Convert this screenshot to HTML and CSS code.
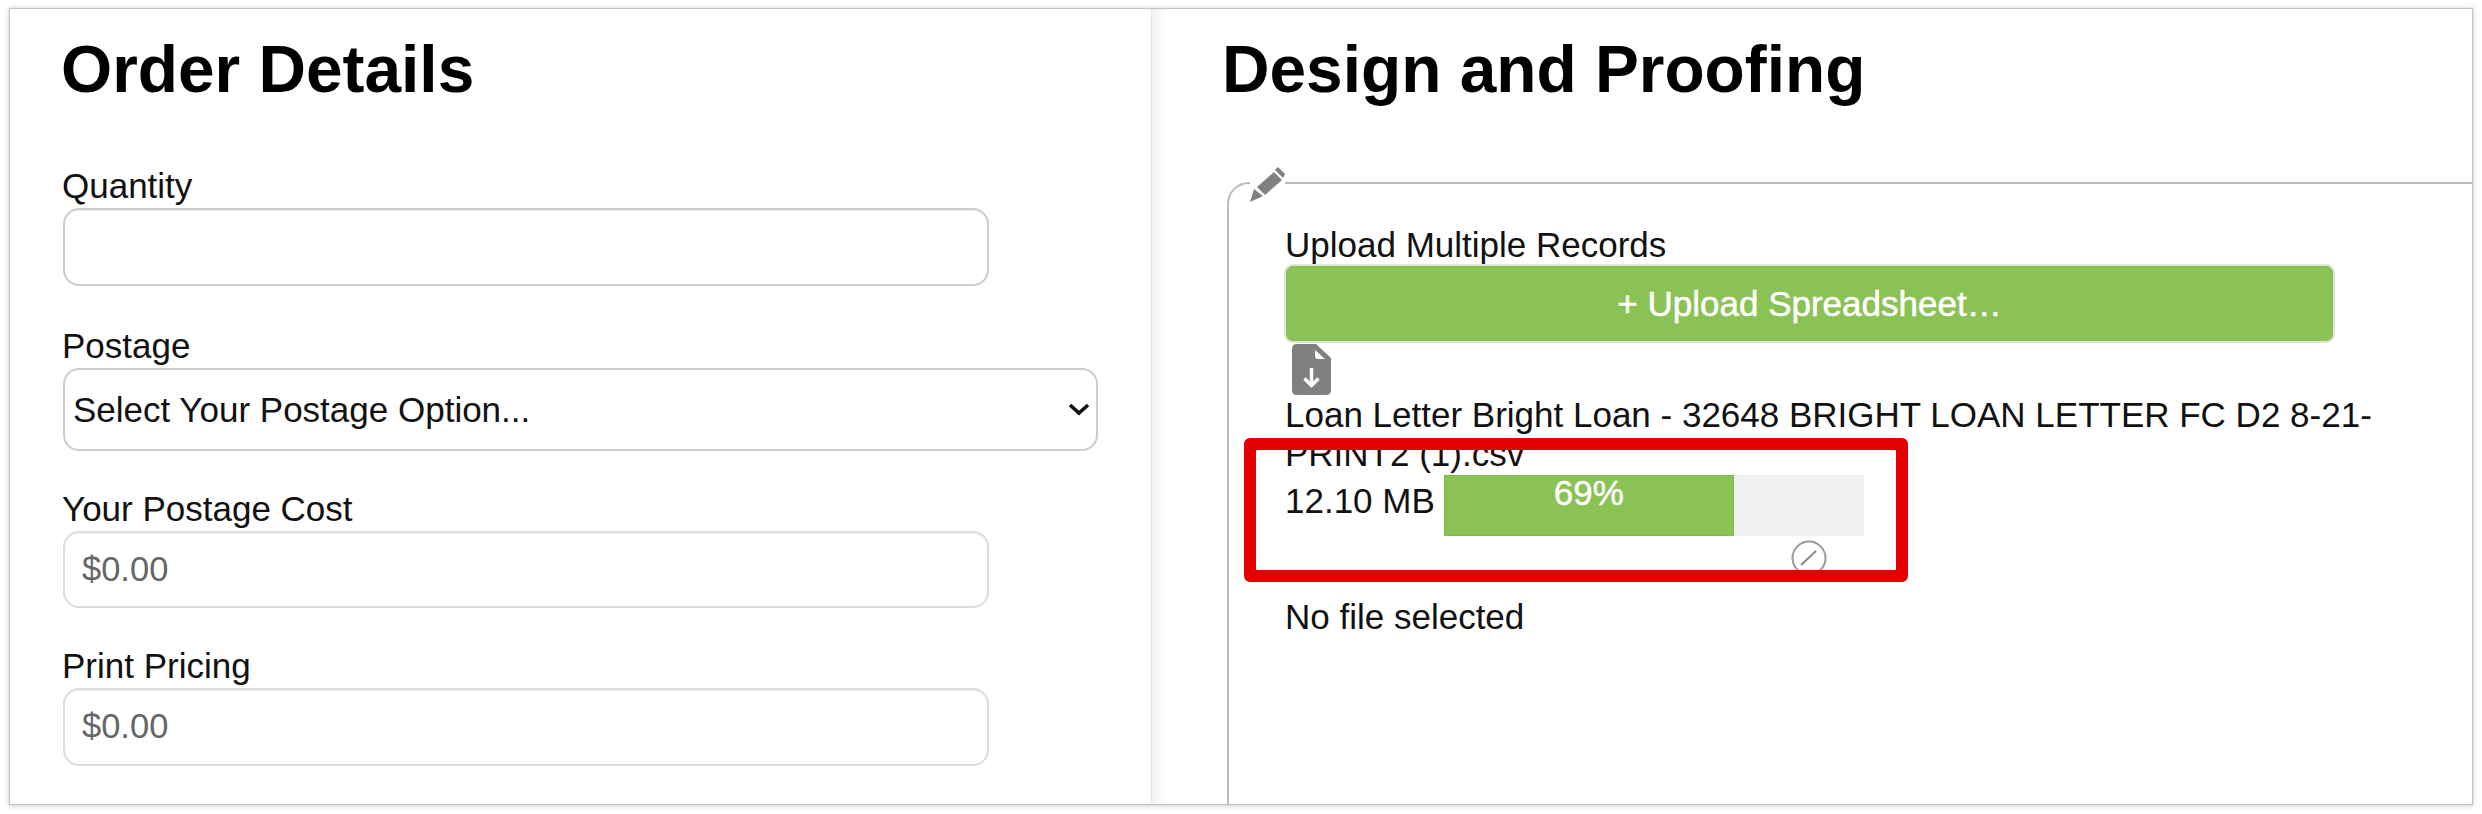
FILE: index.html
```html
<!DOCTYPE html>
<html>
  <head>
    <title>Order</title>
    <link rel="stylesheet" href="styles.css">
  </head>
  <body>
    <div class="panel">
      <!-- Left column -->
      <div class="order">
        <h1>Order Details</h1>
        <div class="field field-first">
          <label for="quantity">Quantity</label>
          <input type="text" id="quantity">
        </div>
        <div class="field">
          <label for="postage">Postage</label>
          <div class="select-wrap">
            <select id="postage">
              <option>Select Your Postage Option...</option>
            </select>
            <svg class="chevron" width="22" height="13" viewBox="0 0 22 13">
              <path d="M2 2 L11 10 L20 2" fill="none" stroke="#111" stroke-width="3.6"/>
            </svg>
          </div>
        </div>
        <div class="field">
          <label for="postageCost">Your Postage Cost</label>
          <input type="text" id="postageCost" class="readonly" value="$0.00" readonly>
        </div>
        <div class="field">
          <label for="printPricing">Print Pricing</label>
          <input type="text" id="printPricing" class="readonly" value="$0.00" readonly>
        </div>
      </div>

      <!-- Right column -->
      <div class="design">
        <h1>Design and Proofing</h1>
        <fieldset class="proof">
          <legend>
            <svg width="35" height="35" viewBox="0 0 35 35" fill="#808080">
              <polygon points="0,35 4,22 13,29"/>
              <polygon points="7,20 24,5 32,13 15,28"/>
              <polygon points="25,3 28,0 35,7 33,11"/>
            </svg>
          </legend>
          <div class="proof-body">
            <div class="upload-label">Upload Multiple Records</div>
            <button class="upload-btn">+ Upload Spreadsheet&hellip;</button>
            <svg class="file-icon" width="39" height="51" viewBox="0 0 39 51">
              <path d="M5 0 H24 L39 14 V46 Q39 51 34 51 H5 Q0 51 0 46 V5 Q0 0 5 0 Z" fill="#808080"/>
              <path d="M23 6 L33 15 H26 Q23 15 23 12 Z" fill="#fff"/>
              <path d="M19.5 24 V41 M12.5 34.5 L19.5 41.5 L26.500 34.5" fill="none" stroke="#fff" stroke-width="3.4"/>
            </svg>
            <div class="file-name">Loan Letter Bright Loan - 32648 BRIGHT LOAN LETTER FC D2 8-21-PRINT2 (1).csv</div>
            <div class="file-row">
              <span class="file-size">12.10 MB</span>
              <div class="file-progress">
                <div class="progress">
                  <div class="progress-bar" style="width: 69%">69%</div>
                </div>
                <svg class="cancel" width="36" height="36" viewBox="0 0 36 36">
                  <circle cx="18" cy="18" r="16.500" fill="none" stroke="#999" stroke-width="2"/>
                  <path d="M10 25 L25 11" fill="none" stroke="#888" stroke-width="2"/>
                </svg>
              </div>
            </div>
            <div class="no-file">No file selected</div>
          </div>
        </fieldset>
      </div>
    </div>

    <!-- Annotation drawn over the screenshot -->
    <div class="callout"></div>
  </body>
</html>
```

FILE: styles.css
```css
html, body {
  margin: 0;
  height: 100%;
  overflow: hidden;
  background-color: #fff;
}

body {
  font-family: "Liberation Sans", Arial, sans-serif;
  font-size: 35px;
  color: #111;
  padding: 9px 10px 10px;
  box-sizing: border-box;
}

.panel {
  display: flex;
  height: 795px;
  overflow: hidden;
  background-color: #fff;
  box-shadow: 0 0 1px 1px #c4c4c4, 0 1px 6px 1px rgba(0,0,0,0.18);
}

h1 {
  margin: 0;
  font-size: 65.8px;
  line-height: 76px;
  font-weight: bold;
  color: #000;
}

/* Left column */
.order {
  width: 1142px;
  flex: none;
  box-sizing: border-box;
  padding: 22px 0 0 51px;
  border-right: 1px solid #e4e4e4;
}

.order h1 {
  margin-bottom: 59px;
}

.field {
  margin-bottom: 38px;
  padding-left: 2px;
}

.field-first {
  margin-bottom: 40px;
}

.field label {
  display: block;
  line-height: 40px;
  margin: 0 0 2px -1px;
}

.field input {
  display: block;
  width: 926px;
  height: 77.5px;
  box-sizing: border-box;
  padding: 0 17px;
  border: 2px solid #ccc;
  border-radius: 16px;
  box-shadow: inset 0 1px 1px rgba(0,0,0,0.075);
  outline: none;
  font: inherit;
  font-size: 34.5px;
  color: #666;
}

.field input.readonly {
  border-color: #ddd;
}

.select-wrap {
  position: relative;
  width: 1035px;
}

.field select {
  display: block;
  width: 100%;
  height: 83px;
  box-sizing: border-box;
  padding: 0 8px;
  border: 2px solid #ccc;
  border-radius: 16px;
  background-color: #fff;
  appearance: none;
  font: inherit;
  color: #111;
}

.chevron {
  position: absolute;
  top: 35px;
  right: 8px;
}

/* Right column */
.design {
  flex: 1;
  min-width: 0;
  padding: 22px 0 0 70px;
  background-image: linear-gradient(to right, #f1f1f1, #fff 15px);
}

.proof {
  width: 1500px;
  height: 800px;
  margin: 58px 0 0 5px;
  padding: 0;
  box-sizing: border-box;
  border: 2px solid #bbb;
  border-radius: 22px;
}

.proof legend {
  margin-left: 21px;
  padding: 0;
  height: 35px;
  line-height: 0;
}

.proof legend svg {
  transform: translateY(2px);
}

.proof-body {
  padding-left: 57px;
}

.upload-label {
  line-height: 40px;
  margin: 25px 0 1px -1px;
}

.upload-btn {
  display: block;
  width: 1047px;
  height: 75px;
  padding: 0;
  border: 0;
  border-top: 1px solid #7fbf3f;
  border-radius: 7px;
  box-shadow: 0 0 0 2px #dfe6d8;
  background-color: #8bc255;
  font: inherit;
  color: #fff;
  -webkit-text-stroke: 0.5px #fff;
}

.file-icon {
  display: block;
  margin: 3px 0 0 6px;
}

.file-name {
  width: 1120px;
  line-height: 39px;
  margin-left: -1px;
}

.file-row {
  display: flex;
  margin-top: 2px;
}

.file-size {
  width: 158px;
  line-height: 39px;
  margin-top: 6px;
  text-indent: -1px;
}

.file-progress {
  display: flex;
  flex-direction: column;
  align-items: flex-end;
}

.progress {
  width: 420px;
  height: 61px;
  background-color: #f0f0f0;
}

.progress-bar {
  height: 100%;
  box-sizing: border-box;
  border: 1px solid #7fbb42;
  background-color: #8bc255;
  color: #fff;
  line-height: 34px;
  text-align: center;
  -webkit-text-stroke: 0.4px #fff;
}

.cancel {
  display: block;
  margin: 4px 37px 0 0;
}

.no-file {
  line-height: 39px;
  margin: 21px 0 0 -1px;
}

/* Red annotation box */
.callout {
  position: absolute;
  left: 1244px;
  top: 438px;
  width: 664px;
  height: 144px;
  box-sizing: border-box;
  border: 12px solid #e30000;
  border-radius: 6px;
}
```
